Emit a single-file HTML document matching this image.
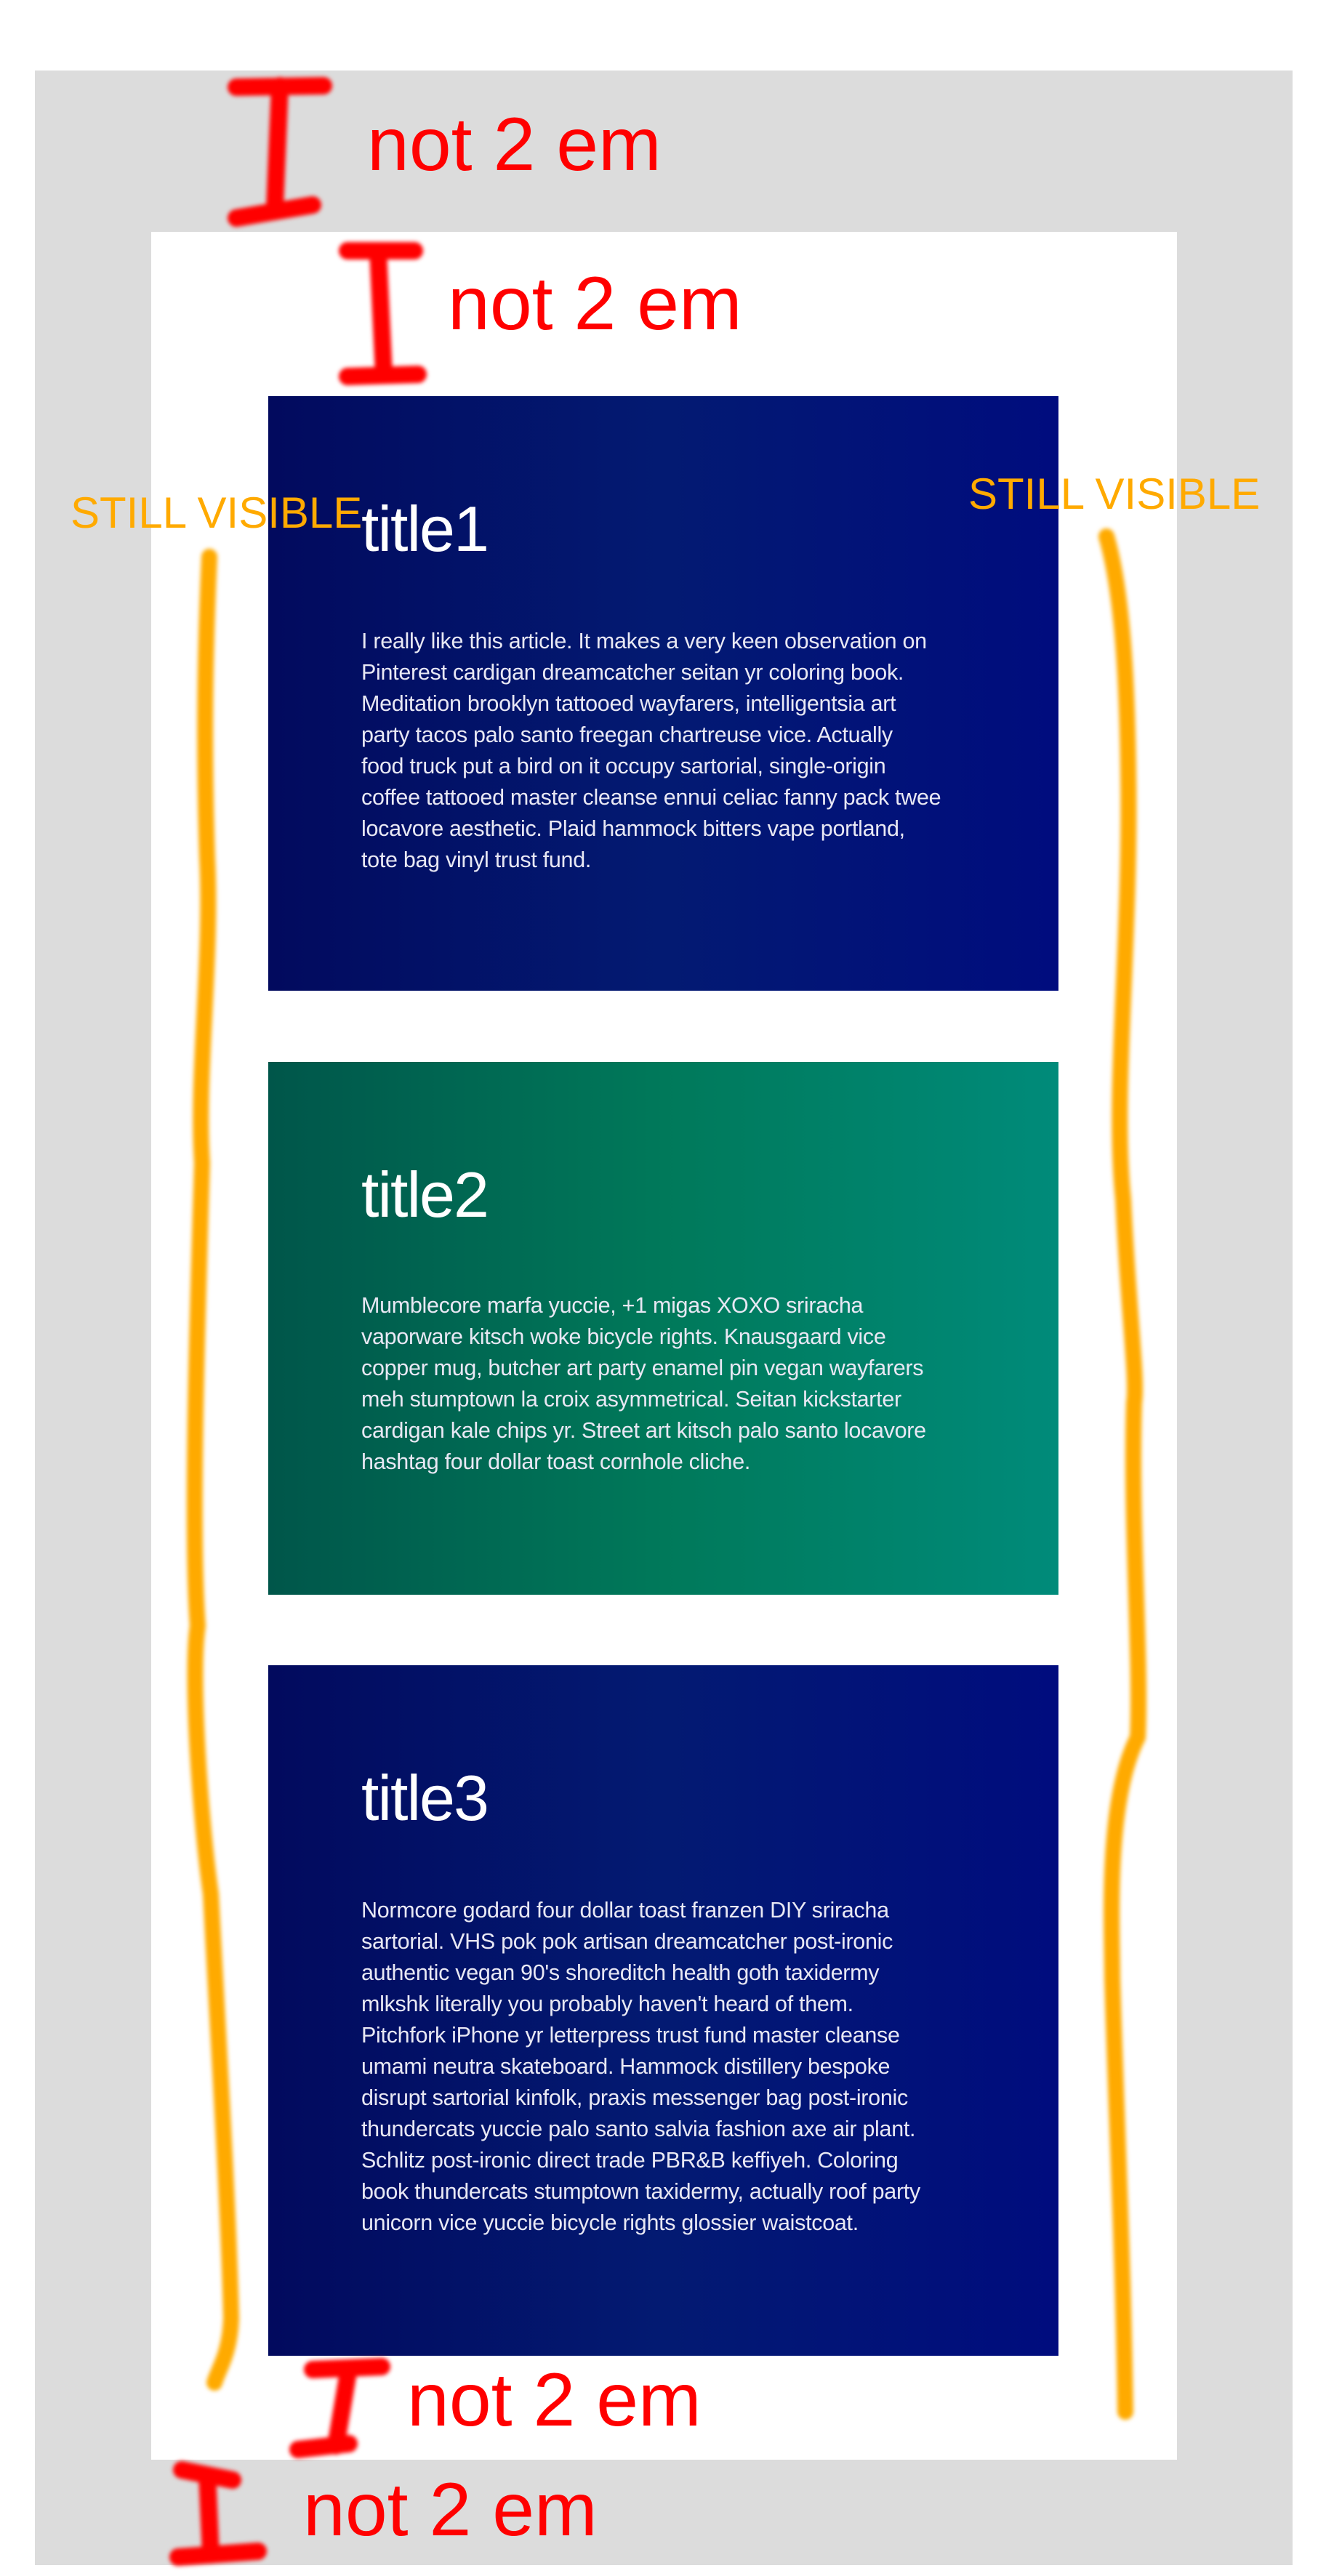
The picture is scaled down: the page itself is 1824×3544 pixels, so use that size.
<!DOCTYPE html>
<html><head><meta charset="utf-8">
<style>
html,body{margin:0;padding:0;}
body{width:1824px;height:3544px;background:#fff;position:relative;overflow:hidden;font-family:"Liberation Sans",sans-serif;}
.grey{position:absolute;left:48px;top:97px;width:1730px;height:3432px;background:#dcdcdc;}
.white{position:absolute;left:208px;top:319px;width:1411px;height:3065px;background:#fff;}
.card{position:absolute;left:369px;width:1087px;color:#fff;box-sizing:border-box;}
.card h2{position:absolute;left:128px;margin:0;font-weight:normal;font-size:88px;line-height:84px;letter-spacing:-2px;}
.card p{position:absolute;left:128px;margin:0;font-size:30.5px;line-height:43px;color:#e8e8f4;white-space:nowrap;font-weight:300;letter-spacing:-0.3px;}
.blue{background:linear-gradient(to right,#020a5e,#031a72 50%,#000c7e);}
.green{background:linear-gradient(to right,#00564a,#00795a 50%,#008b7a);}
.ann{position:absolute;color:#ff0000;font-size:104px;line-height:104px;white-space:nowrap;}
.sv{position:absolute;color:#ffaa00;font-size:60px;line-height:60px;white-space:nowrap;}
svg{position:absolute;left:0;top:0;}
</style></head><body>
<div class="grey"></div>
<div class="white"></div>

<div class="card blue" style="top:545px;height:818px;">
<h2 style="top:141px;">title1</h2>
<p style="top:316px;">I really like this article. It makes a very keen observation on<br>Pinterest cardigan dreamcatcher seitan yr coloring book.<br>Meditation brooklyn tattooed wayfarers, intelligentsia art<br>party tacos palo santo freegan chartreuse vice. Actually<br>food truck put a bird on it occupy sartorial, single-origin<br>coffee tattooed master cleanse ennui celiac fanny pack twee<br>locavore aesthetic. Plaid hammock bitters vape portland,<br>tote bag vinyl trust fund.</p>
</div>

<div class="card green" style="top:1461px;height:733px;">
<h2 style="top:141px;">title2</h2>
<p style="top:314px;">Mumblecore marfa yuccie, +1 migas XOXO sriracha<br>vaporware kitsch woke bicycle rights. Knausgaard vice<br>copper mug, butcher art party enamel pin vegan wayfarers<br>meh stumptown la croix asymmetrical. Seitan kickstarter<br>cardigan kale chips yr. Street art kitsch palo santo locavore<br>hashtag four dollar toast cornhole cliche.</p>
</div>

<div class="card blue" style="top:2291px;height:950px;">
<h2 style="top:141px;">title3</h2>
<p style="top:316px;">Normcore godard four dollar toast franzen DIY sriracha<br>sartorial. VHS pok pok artisan dreamcatcher post-ironic<br>authentic vegan 90's shoreditch health goth taxidermy<br>mlkshk literally you probably haven't heard of them.<br>Pitchfork iPhone yr letterpress trust fund master cleanse<br>umami neutra skateboard. Hammock distillery bespoke<br>disrupt sartorial kinfolk, praxis messenger bag post-ironic<br>thundercats yuccie palo santo salvia fashion axe air plant.<br>Schlitz post-ironic direct trade PBR&amp;B keffiyeh. Coloring<br>book thundercats stumptown taxidermy, actually roof party<br>unicorn vice yuccie bicycle rights glossier waistcoat.</p>
</div>

<div class="ann" style="left:505px;top:147px;">not 2 em</div>
<div class="ann" style="left:616px;top:366px;">not 2 em</div>
<div class="ann" style="left:560px;top:3250px;">not 2 em</div>
<div class="ann" style="left:417px;top:3401px;">not 2 em</div>

<div class="sv" style="left:97px;top:676px;">STILL VISIBLE</div>
<div class="sv" style="left:1332px;top:650px;">STILL VISIBLE</div>

<svg width="1824" height="3544" viewBox="0 0 1824 3544">
<defs><filter id="b" x="-20%" y="-5%" width="140%" height="110%"><feGaussianBlur stdDeviation="3"/></filter></defs>
<g fill="none" stroke="#ff0000" stroke-width="24" stroke-linecap="round" stroke-linejoin="round" filter="url(#b)">
<path d="M325 120 L445 118 M385 118 L378 285 M325 300 L430 282"/>
<path d="M478 345 L570 345 M520 345 L528 515 M478 518 L575 515"/>
<path d="M430 3260 L525 3256 M480 3258 L462 3365 M410 3370 L480 3362"/>
<path d="M250 3398 L320 3412 M285 3405 L290 3515 M245 3518 L355 3510"/>
</g>
<g fill="none" stroke="#ffaa00" stroke-width="22" stroke-linecap="round" stroke-linejoin="round" filter="url(#b)">
<path d="M288 766 C282 900 280 1020 285 1180 C292 1320 270 1480 278 1600 C272 1800 262 2100 272 2237 C262 2300 275 2500 290 2606 C300 2800 315 3050 318 3190 C316 3240 300 3260 295 3278"/>
<path d="M1522 738 C1540 800 1550 900 1552 1060 C1556 1300 1530 1500 1545 1650 C1552 1800 1565 1900 1560 1930 C1555 2100 1570 2280 1565 2390 C1520 2480 1530 2650 1530 2720 C1535 2900 1545 3100 1548 3318"/>
</g>
</svg>
</body></html>
